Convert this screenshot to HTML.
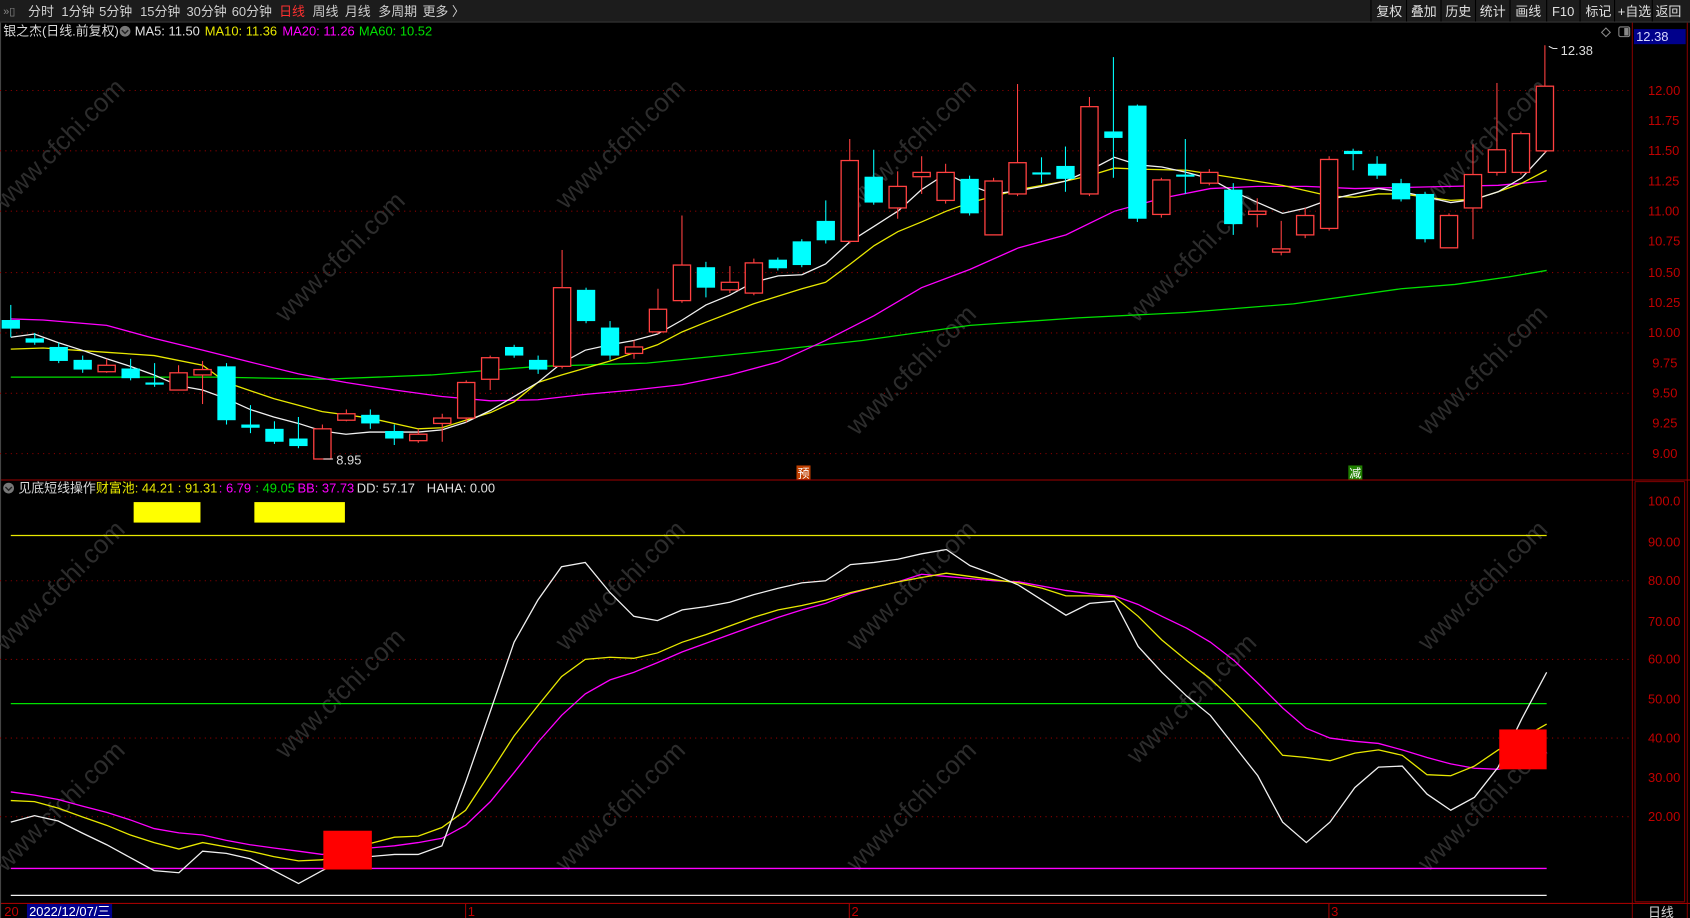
<!DOCTYPE html>
<html><head><meta charset="utf-8">
<style>
html,body{margin:0;padding:0;background:#000;width:1690px;height:918px;overflow:hidden}
svg{display:block}
text{font-family:"Liberation Sans","Noto Sans CJK SC",sans-serif;font-size:12px}
.wm text{font-size:24px}
</style></head><body>
<svg id="s" width="1690" height="918" viewBox="0 0 1568 852" preserveAspectRatio="none">
<rect width="1568" height="852" fill="#000"/>
<rect x="0" y="0" width="1568" height="20" fill="#1c1c1c"/>
<line x1="0" y1="20.5" x2="1568" y2="20.5" stroke="#333"/>
<text x="3" y="14" fill="#888" style="font-size:10px">»▯</text>
<g fill="#d0d0d0">
<text x="26" y="15">分时</text><text x="57" y="15">1分钟</text><text x="92" y="15">5分钟</text>
<text x="130" y="15">15分钟</text><text x="173" y="15">30分钟</text><text x="215" y="15">60分钟</text>
<text x="259" y="15" fill="#ff3030">日线</text><text x="290" y="15">周线</text><text x="320" y="15">月线</text>
<text x="351" y="15">多周期</text><text x="392" y="15">更多 〉</text>
</g>
<g stroke="#000" stroke-width="1">
<line x1="1272" y1="0" x2="1272" y2="20"/><line x1="1305" y1="0" x2="1305" y2="20"/><line x1="1337" y1="0" x2="1337" y2="20"/>
<line x1="1369" y1="0" x2="1369" y2="20"/><line x1="1401" y1="0" x2="1401" y2="20"/><line x1="1435" y1="0" x2="1435" y2="20"/>
<line x1="1466" y1="0" x2="1466" y2="20"/><line x1="1498" y1="0" x2="1498" y2="20"/><line x1="1533" y1="0" x2="1533" y2="20"/>
</g>
<g fill="#e0e0e0">
<text x="1277" y="15">复权</text><text x="1309" y="15">叠加</text><text x="1341" y="15">历史</text><text x="1373" y="15">统计</text>
<text x="1406" y="15">画线</text><text x="1440" y="15">F10</text><text x="1471" y="15">标记</text><text x="1501" y="15">+自选</text><text x="1536" y="15">返回</text>
</g>
<text x="3" y="33" fill="#d8d8d8">银之杰(日线.前复权)</text>
<circle cx="116" cy="29" r="5" fill="#777"/><path d="M113 28l3 3 3-3" stroke="#222" fill="none" stroke-width="1.3"/>
<text x="125" y="33" fill="#e0e0e0">MA5: 11.50</text>
<text x="190" y="33" fill="#e8e800">MA10: 11.36</text>
<text x="262" y="33" fill="#ff00ff">MA20: 11.26</text>
<text x="333" y="33" fill="#00e000">MA60: 10.52</text>
<path d="M1486 30l4-4 4 4-4 4z" stroke="#888" fill="none"/>
<rect x="1502" y="25" width="10" height="9" rx="1.5" stroke="#888" fill="none"/><rect x="1507" y="26" width="4" height="7" fill="#888"/>
<rect x="1516" y="27" width="48" height="14" fill="#00008b"/>
<text x="1518" y="38" fill="#d8d8ff">12.38</text>
<g stroke="#800000" fill="none">
<line x1="1514.5" y1="21" x2="1514.5" y2="852"/>
<line x1="1565.5" y1="21" x2="1565.5" y2="852"/>
<line x1="0" y1="445.5" x2="1568" y2="445.5" stroke="#a00000"/>
<line x1="0" y1="838.5" x2="1568" y2="838.5" stroke="#a00000"/>
<line x1="1517" y1="447" x2="1517" y2="837"/><line x1="1563" y1="447" x2="1563" y2="837"/>
<line x1="1517" y1="447" x2="1563" y2="447"/><line x1="1517" y1="837" x2="1563" y2="837"/>
<line x1="0.5" y1="21" x2="0.5" y2="852" stroke="#444"/>
</g>
<g stroke="#900000" stroke-dasharray="1,4">
<line x1="0" y1="84" x2="1514" y2="84"/><line x1="0" y1="140" x2="1514" y2="140"/><line x1="0" y1="196" x2="1514" y2="196"/>
<line x1="0" y1="253" x2="1514" y2="253"/><line x1="0" y1="309" x2="1514" y2="309"/><line x1="0" y1="365" x2="1514" y2="365"/>
<line x1="0" y1="421" x2="1514" y2="421"/>
<line x1="0" y1="539" x2="1514" y2="539"/><line x1="0" y1="612" x2="1514" y2="612"/><line x1="0" y1="685" x2="1514" y2="685"/><line x1="0" y1="758" x2="1514" y2="758"/>
</g>
<g fill="#c00000">
<text x="1529" y="88">12.00</text><text x="1529" y="116">11.75</text><text x="1529" y="144">11.50</text><text x="1529" y="172">11.25</text>
<text x="1529" y="200">11.00</text><text x="1529" y="228">10.75</text><text x="1529" y="257">10.50</text><text x="1529" y="285">10.25</text>
<text x="1529" y="313">10.00</text><text x="1533" y="341">9.75</text><text x="1533" y="369">9.50</text><text x="1533" y="397">9.25</text><text x="1533" y="425">9.00</text>
<text x="1529" y="469">100.0</text><text x="1529" y="507">90.00</text><text x="1529" y="543">80.00</text><text x="1529" y="581">70.00</text>
<text x="1529" y="616">60.00</text><text x="1529" y="653">50.00</text><text x="1529" y="689">40.00</text><text x="1529" y="726">30.00</text><text x="1529" y="762">20.00</text>
</g>
<g class="wm" fill="#2c2c2c">
<text transform="translate(5,195) rotate(-45)">www.cfchi.com</text>
<text transform="translate(265,300) rotate(-45)">www.cfchi.com</text>
<text transform="translate(525,195) rotate(-45)">www.cfchi.com</text>
<text transform="translate(795,405) rotate(-45)">www.cfchi.com</text>
<text transform="translate(795,195) rotate(-45)">www.cfchi.com</text>
<text transform="translate(1055,300) rotate(-45)">www.cfchi.com</text>
<text transform="translate(1325,405) rotate(-45)">www.cfchi.com</text>
<text transform="translate(1325,195) rotate(-45)">www.cfchi.com</text>
<text transform="translate(5,605) rotate(-45)">www.cfchi.com</text>
<text transform="translate(265,705) rotate(-45)">www.cfchi.com</text>
<text transform="translate(525,605) rotate(-45)">www.cfchi.com</text>
<text transform="translate(795,810) rotate(-45)">www.cfchi.com</text>
<text transform="translate(795,605) rotate(-45)">www.cfchi.com</text>
<text transform="translate(1055,710) rotate(-45)">www.cfchi.com</text>
<text transform="translate(1325,810) rotate(-45)">www.cfchi.com</text>
<text transform="translate(1325,605) rotate(-45)">www.cfchi.com</text>
<text transform="translate(5,810) rotate(-45)">www.cfchi.com</text>
<text transform="translate(525,810) rotate(-45)">www.cfchi.com</text>
</g>
<g fill="none" stroke-width="1.2">
<polyline stroke="#00e000" points="10,350 100,350 200,350 300,352 400,348 500,340 600,337 700,327 800,316 900,302 1000,295 1100,290 1200,282 1300,268 1350,264 1400,257 1435,251"/>
<polyline stroke="#ff00ff" points="10,296 40,297 99,302 143,314 188,325 232,336 277,347 321,355 366,362 410,368 455,372 499,371 543,366 588,362 633,357 677,348 722,336 766,316 811,293 855,267 900,250 945,230 989,218 1034,196 1078,184 1123,175 1167,173 1212,173 1257,175 1301,174 1346,173 1390,172 1435,168"/>
<polyline stroke="#e8e800" points="10,324 40,323 99,327 143,330 188,339 210,355 254,370 299,382 343,388 388,398 410,397 432,390 455,383 477,373 499,355 521,348 566,335 610,320 633,308 655,299 699,282 744,268 766,262 789,245 811,228 833,215 855,206 878,196 900,188 945,176 989,168 1011,163 1034,156 1056,157 1101,158 1145,165 1190,172 1234,182 1257,183 1279,180 1301,180 1346,186 1368,185 1390,178 1412,170 1435,158"/>
<polyline stroke="#f0f0f0" points="10,313 32,310 54,318 76,325 99,333 121,340 143,348 166,358 188,362 210,370 232,380 254,387 277,393 299,400 321,403 343,401 366,401 388,401 410,399 432,392 455,381 477,368 499,355 521,337 543,325 566,320 588,316 610,310 633,297 655,283 677,274 699,262 722,256 744,255 766,245 789,224 811,210 833,196 855,176 878,161 900,172 922,180 945,177 967,173 989,168 1011,158 1034,146 1056,153 1078,155 1101,160 1123,166 1145,178 1167,188 1190,198 1212,193 1234,185 1257,180 1279,175 1301,178 1324,183 1346,188 1368,185 1390,178 1412,165 1435,140"/>
</g>
<g id="candles"></g>
<path d="M300 426h9" stroke="#ddd"/><text x="312" y="431" fill="#ddd">8.95</text>
<path d="M1437 43l4 2h4" stroke="#ddd" fill="none"/><text x="1448" y="51" fill="#ddd">12.38</text>
<rect x="739" y="432" width="13" height="13" fill="#c04000"/><text x="740" y="443" fill="#fff" style="font-size:11px">预</text>
<rect x="1251" y="432" width="13" height="13" fill="#208000"/><text x="1252" y="443" fill="#fff" style="font-size:11px">减</text>
<circle cx="8" cy="453" r="5" fill="#777"/><path d="M5 452l3 3 3-3" stroke="#222" fill="none" stroke-width="1.3"/>
<text x="17" y="457" fill="#d8d8d8">见底短线操作</text>
<text x="89" y="457" fill="#e8e800">财富池: 44.21 : 91.31</text>
<text x="203" y="457" fill="#ff00ff">: 6.79</text>
<text x="237" y="457" fill="#00e000">: 49.05</text>
<text x="276" y="457" fill="#ff00ff">BB: 37.73</text>
<text x="331" y="457" fill="#e0e0e0">DD: 57.17</text>
<text x="396" y="457" fill="#e0e0e0">HAHA: 0.00</text>
<rect x="124" y="466" width="62" height="19" fill="#ffff00"/>
<rect x="236" y="466" width="84" height="19" fill="#ffff00"/>
<g stroke-width="1.2" fill="none">
<line x1="10" y1="497" x2="1435" y2="497" stroke="#e8e800"/>
<line x1="10" y1="653" x2="1435" y2="653" stroke="#00e000"/>
<line x1="10" y1="806" x2="1435" y2="806" stroke="#ff00ff"/>
<line x1="10" y1="831" x2="1435" y2="831" stroke="#f0f0f0"/>
<polyline stroke="#ff00ff" points="10,735 32,738 54,742 76,748 99,754 121,761 143,769 166,773 188,775 210,780 232,784 254,787 277,790 299,793 321,790 343,787 366,785 388,782 410,778 432,766 455,744 477,717 499,689 521,664 543,644 566,631 588,624 610,615 633,605 655,597 677,589 699,581 722,573 744,566 766,560 789,551 811,545 833,540 855,533 878,535 900,537 922,539 945,540 967,544 989,548 1011,551 1034,553 1056,561 1078,572 1101,583 1123,596 1145,613 1167,634 1190,657 1212,676 1234,685 1257,688 1279,690 1301,696 1324,703 1346,709 1368,713 1390,714 1412,710 1435,698"/>
<polyline stroke="#e8e800" points="10,743 32,744 54,750 76,758 99,766 121,775 143,782 166,788 188,782 210,786 232,790 254,795 277,799 299,798 321,790 343,783 366,777 388,776 410,768 432,752 455,717 477,683 499,655 521,628 543,612 566,610 588,611 610,606 633,596 655,589 677,581 699,573 722,566 744,562 766,557 789,550 811,545 833,540 855,536 878,532 900,535 922,538 945,541 967,546 989,553 1011,553 1034,554 1056,572 1078,594 1101,613 1123,630 1145,651 1167,674 1190,701 1212,703 1234,706 1257,699 1279,696 1301,701 1324,719 1346,720 1368,711 1390,696 1412,685 1435,672"/>
<polyline stroke="#f0f0f0" points="10,763 32,757 54,762 76,773 99,784 121,796 143,808 166,810 188,790 210,792 232,797 254,808 277,820 299,808 321,797 343,795 366,793 388,793 410,785 432,726 455,660 477,596 499,557 521,526 543,522 566,550 588,572 610,576 633,566 655,563 677,559 699,552 722,546 744,541 766,539 789,524 811,522 833,519 855,514 878,510 900,525 922,533 945,543 967,557 989,571 1011,560 1034,558 1056,600 1078,624 1101,646 1123,664 1145,692 1167,720 1190,763 1212,782 1234,763 1257,731 1279,712 1301,711 1324,737 1346,752 1368,740 1390,712 1412,667 1435,624"/>
</g>
<rect x="300" y="771" width="45" height="36" fill="#ff0000"/>
<rect x="1391" y="677" width="44" height="37" fill="#ff0000"/>
<text x="4" y="850" fill="#c00000">20</text>
<rect x="25" y="839" width="79" height="13" fill="#00008b"/>
<text x="27" y="850" fill="#fff">2022/12/07/三</text>
<g stroke="#a00000"><line x1="432" y1="839" x2="432" y2="852"/><line x1="788" y1="839" x2="788" y2="852"/><line x1="1233" y1="839" x2="1233" y2="852"/></g>
<text x="434" y="850" fill="#c00000">1</text><text x="790" y="850" fill="#c00000">2</text><text x="1235" y="850" fill="#c00000">3</text>
<text x="1529" y="851" fill="#d8d8d8">日线</text>
</svg>
<script>
var d=[[0,297,305,283,313],[0,314,318,309,320],[0,322,335,318,337],[0,334,343,330,346],[1,339,345,333,346],[0,342,351,333,353],[0,355,357,337,359],[1,346,362,339,362],[1,343,348,335,375],[0,340,390,337,394],[0,394,397,376,402],[0,398,410,391,412],[0,407,414,387,416],[1,398,426,394,426],[1,384,390,380,391],[0,385,393,380,398],[0,400,407,394,413],[1,403,409,398,411],[1,388,393,384,410],[1,355,388,353,392],[1,332,352,330,362],[0,322,330,320,332],[0,334,343,330,347],[1,267,340,232,342],[0,269,298,267,300],[0,304,330,298,334],[1,322,328,316,333],[1,287,308,268,310],[1,246,279,200,281],[0,248,267,243,276],[1,262,269,247,272],[1,244,272,240,274],[0,241,249,239,251],[0,224,246,222,248],[0,205,223,186,226],[1,149,224,129,226],[0,164,188,139,190],[1,173,193,159,203],[1,160,164,145,180],[1,160,186,152,189],[0,166,198,163,200],[1,168,218,165,218],[1,151,180,78,182],[0,160,162,146,170],[0,154,166,136,178],[1,99,180,90,182],[0,122,128,53,165],[0,98,203,97,206],[1,167,199,165,202],[0,162,164,129,180],[1,160,170,157,172],[0,176,208,170,218],[1,196,199,184,211],[1,231,234,205,237],[1,200,218,193,221],[1,148,212,145,214],[0,140,143,138,158],[0,152,163,145,166],[0,170,185,166,187],[0,180,222,178,225],[1,200,230,198,230],[1,162,193,134,222],[1,139,160,77,163],[1,124,160,122,162],[1,80,140,42,142]];
var g=document.getElementById('candles'),h='';
d.forEach(function(c,i){var x=10+i*22.24,w=17,l=x-w/2;
if(c[0]){h+='<line x1="'+x+'" y1="'+c[3]+'" x2="'+x+'" y2="'+c[1]+'" stroke="#ff4040"/><line x1="'+x+'" y1="'+c[2]+'" x2="'+x+'" y2="'+c[4]+'" stroke="#ff4040"/><rect x="'+(l+.5)+'" y="'+c[1]+'" width="'+(w-1)+'" height="'+Math.max(1,c[2]-c[1])+'" fill="#000" stroke="#ff4040" stroke-width="1.2"/>';}
else{h+='<line x1="'+x+'" y1="'+c[3]+'" x2="'+x+'" y2="'+c[4]+'" stroke="#00ffff"/><rect x="'+l+'" y="'+c[1]+'" width="'+w+'" height="'+Math.max(2,c[2]-c[1])+'" fill="#00ffff"/>';}
});
g.innerHTML=h;
</script>
</body></html>
